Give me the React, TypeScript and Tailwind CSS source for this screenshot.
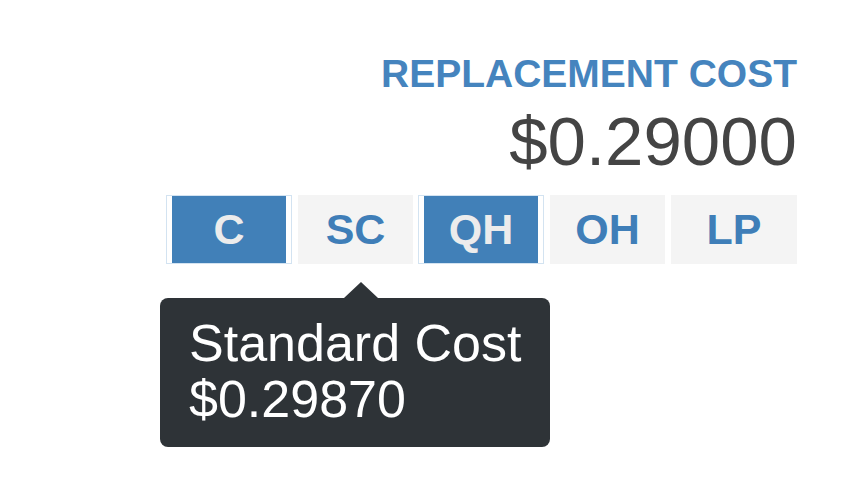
const font = { fontFamily: '"Liberation Sans", Arial, Helvetica, sans-serif' };

function ActiveCell({ label }: { label: string }) {
  return (
    <div className="flex h-[69px] w-[126px] border border-[#d3e3f1] bg-white px-[5px]">
      <div className="flex flex-1 items-center justify-center bg-[#4180b8] text-[43px] font-bold leading-none text-[#ececec]">
        {label}
      </div>
    </div>
  );
}

function Cell({ label, width }: { label: string; width: string }) {
  return (
    <div
      className={`flex h-[69px] items-center justify-center bg-[#f4f4f4] text-[43px] font-bold leading-none text-[#3f7eb8] ${width}`}
    >
      {label}
    </div>
  );
}

export default function App() {
  return (
    <div className="relative h-[485px] w-[843px] overflow-hidden bg-white" style={font}>
      <div className="flex flex-col items-end pr-[46px] pt-[54px]">
        <div className="text-[39px] font-bold leading-[39px] text-[#4584be]">REPLACEMENT COST</div>
        <div className="mt-[14px] text-[69px] leading-[69px] text-[#444444]">$0.29000</div>
        <div className="mt-[19px] flex">
          <ActiveCell label="C" />
          <div className="ml-[6px]">
            <Cell label="SC" width="w-[115px]" />
          </div>
          <div className="ml-[5px]">
            <ActiveCell label="QH" />
          </div>
          <div className="ml-[6px]">
            <Cell label="OH" width="w-[115px]" />
          </div>
          <div className="ml-[6px]">
            <Cell label="LP" width="w-[126px]" />
          </div>
        </div>
      </div>

      {/* tooltip for SC */}
      <div className="absolute left-[160px] top-[298px] h-[149px] w-[390px] rounded-[8px] bg-[#2e3337] pl-[29px] pt-[17px] text-[52px] leading-[56px] text-white">
        <div className="absolute left-[184px] top-[-16px] h-0 w-0 border-x-[17px] border-b-[16px] border-x-transparent border-b-[#2e3337]" />
        <div>Standard Cost</div>
        <div>$0.29870</div>
      </div>
    </div>
  );
}
